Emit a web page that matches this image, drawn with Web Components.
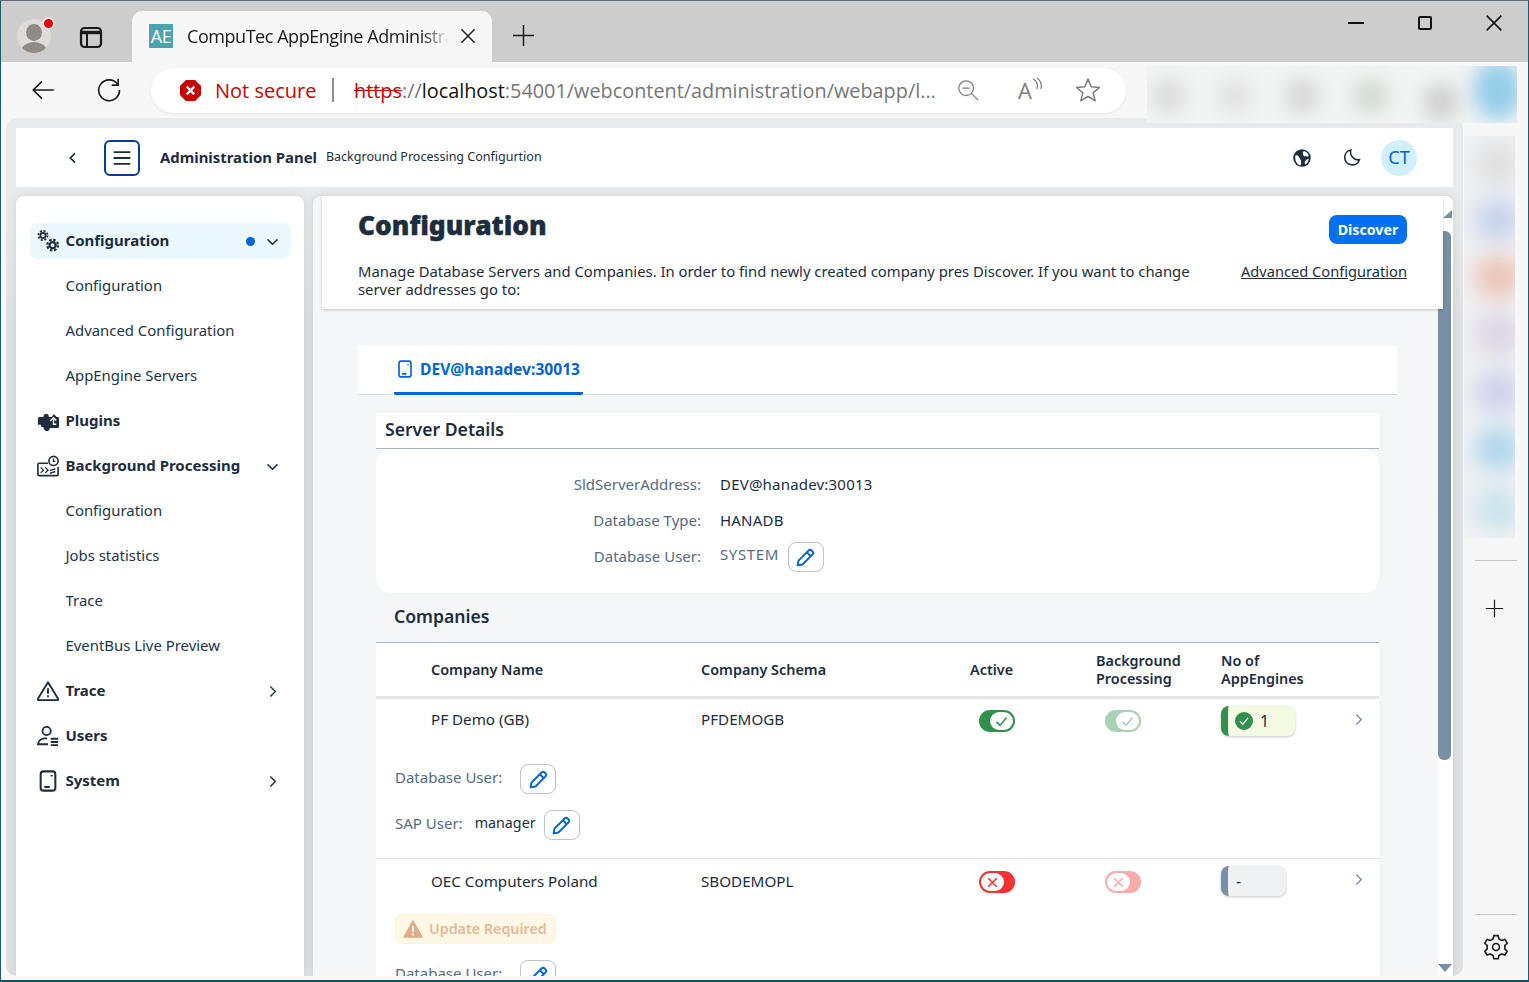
<!DOCTYPE html>
<html lang="en">
<head>
<meta charset="utf-8">
<title>CompuTec AppEngine Administration</title>
<style>
  html, body { margin: 0; height: 100%; overflow: hidden; background: #f7f7f7; }
  body { font-family: "Noto Sans", sans-serif; color: #1d2d3e; }
</style>
</head>
<body>
<browser-window>
  <tab-strip></tab-strip>
  <address-toolbar></address-toolbar>
  <div slot="frame">
    <app-header></app-header>
    <div style="display:flex;gap:9px;height:780px;margin-top:9px">
      <side-nav>
        <nav-item icon="gears" active dot chevron="down">Configuration</nav-item>
        <nav-item sub>Configuration</nav-item>
        <nav-item sub>Advanced Configuration</nav-item>
        <nav-item sub>AppEngine Servers</nav-item>
        <nav-item icon="puzzle">Plugins</nav-item>
        <nav-item icon="process" chevron="down">Background Processing</nav-item>
        <nav-item sub>Configuration</nav-item>
        <nav-item sub>Jobs statistics</nav-item>
        <nav-item sub>Trace</nav-item>
        <nav-item sub>EventBus Live Preview</nav-item>
        <nav-item icon="warning" chevron="right">Trace</nav-item>
        <nav-item icon="users">Users</nav-item>
        <nav-item icon="device" chevron="right">System</nav-item>
      </side-nav>
      <main-panel>
        <server-details></server-details>
        <companies-table>
          <company-row name="PF Demo (GB)" schema="PFDEMOGB" state="on" count="1" sapuser="manager"></company-row>
          <company-row name="OEC Computers Poland" schema="SBODEMOPL" state="off" count="-" update></company-row>
        </companies-table>
      </main-panel>
    </div>
  </div>
  <side-rail slot="rail"></side-rail>
</browser-window>

<script>
const ICONS = {
  back: `<path d="M22 12H3M11 4l-8 8 8 8" fill="none" stroke="currentColor" stroke-width="1.5"/>`,
  reload: `<path d="M20 6.8A9.6 9.6 0 1 0 21.7 12" fill="none" stroke="currentColor" stroke-width="1.5"/><path d="M20.5 1.5v6h-6" fill="none" stroke="currentColor" stroke-width="1.5"/>`,
  octagon: `<polygon points="7.2,1 16.8,1 23,7.2 23,16.8 16.8,23 7.2,23 1,16.8 1,7.2" fill="#c80000"/><path d="M8 8l8 8M16 8l-8 8" stroke="#fff" stroke-width="2.4"/>`,
  zoomout: `<circle cx="10" cy="10" r="8" fill="none" stroke="currentColor" stroke-width="1.4"/><path d="M6 10h8M16 16l7 7" fill="none" stroke="currentColor" stroke-width="1.4"/>`,
  star: `<polygon points="12,2 15,9 22.5,9.7 16.8,14.6 18.6,22 12,18 5.4,22 7.2,14.6 1.5,9.7 9,9" fill="none" stroke="currentColor" stroke-width="1.4" stroke-linejoin="round"/>`,
  close: `<path d="M4 4l16 16M20 4L4 20" fill="none" stroke="currentColor" stroke-width="1.7"/>`,
  plus: `<path d="M12 1v22M1 12h22" fill="none" stroke="currentColor" stroke-width="1.5"/>`,
  sidetabs: `<rect x="2" y="3" width="20" height="19" rx="3.5" fill="none" stroke="currentColor" stroke-width="2.200"/><path d="M2.500 7.500h19" stroke="currentColor" stroke-width="3.400"/><path d="M8 9v12" stroke="currentColor" stroke-width="2"/>`,
  chevleft: `<path d="M15 5l-7 7 7 7" fill="none" stroke="currentColor" stroke-width="2.4"/>`,
  chevright: `<path d="M9 5l7 7-7 7" fill="none" stroke="currentColor" stroke-width="2"/>`,
  chevdown: `<path d="M5 9l7 7 7-7" fill="none" stroke="currentColor" stroke-width="2"/>`,
  menu: `<path d="M2 5h20M2 12h20M2 19h20" fill="none" stroke="currentColor" stroke-width="2.2"/>`,
  globe: `<circle cx="12" cy="12" r="10.500" fill="#1d2d3e"/><path d="M4 9c3-1 4 1 5 3s2 2 2 4 0 4-1 5c-4-1-7-6-6-12zM14 4c3 0 6 3 6 6-2 1-3-1-4 0s-3-1-3-3 0-2 1-3zM17 14l3-1c0 3-2 6-4 7l-1-3z" fill="#fff"/>`,
  moon: `<path d="M11 2.5a9.5 9.5 0 1 0 11 12.2c-6 1.8-12.6-4.7-11-12.2z" fill="none" stroke="currentColor" stroke-width="2"/>`,
  gears: `<circle cx="6.500" cy="6" r="2.800" fill="none" stroke="currentColor" stroke-width="2"/><circle cx="6.500" cy="6" r="5" fill="none" stroke="currentColor" stroke-width="2" stroke-dasharray="2.200 1.730"/><circle cx="17" cy="16.500" r="3.300" fill="none" stroke="currentColor" stroke-width="2.400"/><circle cx="17" cy="16.500" r="5.800" fill="none" stroke="currentColor" stroke-width="2.400" stroke-dasharray="2.700 1.860"/>`,
  puzzle: `<path d="M1 9.500c0-1.500 1-2 2.500-2H7C7 5.500 8 4 10 4s3 1.500 3 3.500h3l2-3 2 1.500 1.500 1.500h1c.8 0 1.500.7 1.500 1.500v9c0 .8-.7 1.500-1.500 1.500H14c0 2-1.500 3.500-3.500 3.500S7 20.500 7 18.500H4.500C5.500 16 3 15 1 16.500z" fill="currentColor"/><path d="M14.500 12l3.500-3.500 3 3M18 10v5.500h3" fill="none" stroke="#fff" stroke-width="1.500"/>`,
  process: `<path d="M12 9H2.500C1.700 9 1 9.700 1 10.500v10.500c0 .8.7 1.500 1.500 1.500h19c.8 0 1.500-.7 1.500-1.500v-8" fill="none" stroke="currentColor" stroke-width="1.800"/><path d="M4 13.500l3 3-3 3M9 13.500l3 3-3 3M14 20l6-2M14 17l6-2" fill="none" stroke="currentColor" stroke-width="1.500"/><circle cx="18" cy="6.500" r="5" fill="#fff" stroke="currentColor" stroke-width="1.800"/><path d="M18 3.800v3.200h2" fill="none" stroke="currentColor" stroke-width="1.500"/>`,
  warning: `<path d="M12 2.500L23 20.500c.4.800 0 1.500-1 1.500H2c-1 0-1.400-.7-1-1.500z" fill="none" stroke="currentColor" stroke-width="2" stroke-linejoin="round"/><path d="M12 9v6M12 16.500v2.200" stroke="currentColor" stroke-width="2"/>`,
  users: `<circle cx="10.500" cy="6.500" r="4.500" fill="none" stroke="currentColor" stroke-width="2"/><path d="M11 14.500H8.500C5 14.500 1.500 17 1 21h11" fill="none" stroke="currentColor" stroke-width="2"/><path d="M15 15h8M15 18.500h8M15 22h8" stroke="currentColor" stroke-width="2"/>`,
  device: `<rect x="4" y="1.500" width="16" height="21" rx="3" fill="none" stroke="currentColor" stroke-width="2.200"/><path d="M8 18.500h6M16 5.500v1.500" stroke="currentColor" stroke-width="2.200"/>`,
  pencil: `<path d="M3 21l1-5.500L15.500 4c1-1 2.500-1 3.500 0l1 1c1 1 1 2.500 0 3.500L8.500 20z" fill="none" stroke="currentColor" stroke-width="2.200" stroke-linejoin="round"/><path d="M13.500 6l4.500 4.500" stroke="currentColor" stroke-width="2.200"/>`,
  check: `<path d="M5 12.500l5 5 9-11" fill="none" stroke="currentColor" stroke-width="2.200"/>`,
  cross: `<path d="M6 6l12 12M18 6L6 18" fill="none" stroke="currentColor" stroke-width="2.200"/>`,
  gear: `<path d="M10 1.500h4l.7 3 2.600 1.500 3-1 2 3.500-2.200 2.200v3l2.200 2.200-2 3.500-3-1-2.600 1.500-.7 3h-4l-.7-3L6.700 18.400l-3 1-2-3.500 2.200-2.200v-3L1.700 8.500l2-3.500 3 1 2.600-1.500z" fill="none" stroke="currentColor" stroke-width="1.500" stroke-linejoin="round"/><circle cx="12" cy="12" r="3.200" fill="none" stroke="currentColor" stroke-width="1.500"/>`,
};

class XIcon extends HTMLElement {
  connectedCallback() {
    const size = this.getAttribute("size") || 24;
    const shadow = this.attachShadow({ mode: "open" });
    shadow.innerHTML = `
      <style>:host { display: inline-flex; flex: none; line-height: 0; } svg { display: block; }</style>
      <svg width="${size}" height="${size}" viewBox="0 0 24 24">${ICONS[this.getAttribute("name")] || ""}</svg>`;
  }
}
customElements.define("x-icon", XIcon);

class BrowserWindow extends HTMLElement {
  constructor() {
    super();
    this.attachShadow({ mode: "open" }).innerHTML = `
      <style>
        :host {
          display: flex; flex-direction: column; box-sizing: border-box;
          height: 982px; width: 1529px; overflow: hidden;
          border-top: 1px solid #5f6c72; border-left: 1px solid #1c5a74;
          border-right: 1px solid #1c5a74; border-bottom: 2px solid #14506a;
          background: #f7f7f7;
        }
        .body { display: flex; height: 858px; }
        .frame {
          box-sizing: border-box; width: 1457px; height: 858px; margin-left: 5px;
          padding: 10px 10px 0; background: #e9eaec; border-radius: 10px;
          background: linear-gradient(#e9eaec 78px, #dfe2e5 200px);
          overflow: hidden; flex: none;
        }
      </style>
      <slot></slot>
      <div class="body">
        <div class="frame"><slot name="frame"></slot></div>
        <slot name="rail"></slot>
      </div>`;
  }
}
customElements.define("browser-window", BrowserWindow);

class TabStrip extends HTMLElement {
  constructor() {
    super();
    this.attachShadow({ mode: "open" }).innerHTML = `
      <style>
        :host {
          display: flex; align-items: flex-end; height: 61px; background: #cdcdcd;
          font-family: "Open Sans", sans-serif; color: #1a1a1a; flex: none;
        }
        .avatar {
          position: relative; width: 34px; height: 34px; margin: 0 0 9px 16px; border-radius: 50%;
          background: #dedcd9; overflow: hidden; flex: none;
        }
        .avatar i { position: absolute; background: #8f8b87; border-radius: 50%; }
        .avatar .h { left: 9px; top: 5px; width: 16px; height: 17px; }
        .avatar .b { left: 4px; top: 23px; width: 26px; height: 18px; }
        .dot {
          position: absolute; left: 42px; top: 17px; width: 9px; height: 9px; border-radius: 50%;
          background: #e60000; border: 2px solid #e9e9e9;
        }
        .vt { margin: 0 0 13px 28px; color: #1a1a1a; }
        .tab {
          display: flex; align-items: center; box-sizing: border-box; width: 360px; height: 51px; margin-left: 29px;
          background: #f7f7f7; border-radius: 10px 10px 0 0; padding: 0 14px 2px 17px;
        }
        .fav {
          width: 24px; height: 24px; background: #4aa3ad; color: #fff; font: 400 18px/24px "Open Sans", sans-serif;
          text-align: center; flex: none; overflow: hidden; letter-spacing: -.5px;
        }
        .title {
          flex: 1; margin-left: 14px; font-size: 18px; letter-spacing: -.45px; white-space: nowrap; overflow: hidden;
          -webkit-mask-image: linear-gradient(90deg, #000 235px, transparent 262px);
        }
        .plus { margin: 0 0 15px 20px; }
        .spacer { flex: 1; }
        .win { display: flex; align-items: center; margin-bottom: 28px; }
        .min { width: 16px; height: 2px; background: #111; margin-right: 54px; }
        .max { width: 10px; height: 10px; border: 2px solid #111; border-radius: 2px; margin-right: 50.500px; }
        .cl { margin-right: 23.500px; color: #111; }
      </style>
      <div class="avatar"><i class="h"></i><i class="b"></i></div>
      <span class="dot"></span>
      <x-icon class="vt" name="sidetabs" size="24"></x-icon>
      <div class="tab">
        <span class="fav">AE</span>
        <span class="title">CompuTec AppEngine Administration</span>
        <x-icon name="close" size="20"></x-icon>
      </div>
      <x-icon class="plus" name="plus" size="23"></x-icon>
      <div class="spacer"></div>
      <div class="win"><span class="min"></span><span class="max"></span><x-icon class="cl" name="close" size="22"></x-icon></div>`;
  }
}
customElements.define("tab-strip", TabStrip);

class AddressToolbar extends HTMLElement {
  constructor() {
    super();
    this.attachShadow({ mode: "open" }).innerHTML = `
      <style>
        :host {
          position: relative; display: flex; align-items: center; height: 56px; background: #f7f7f7;
          font-family: "Open Sans", sans-serif; flex: none; z-index: 2;
        }
        .nav { margin-left: 29px; color: #1a1a1a; }
        .nav + .nav { margin-left: 40px; }
        .pill {
          display: flex; align-items: center; box-sizing: border-box; width: 975px; height: 45px; margin-left: 29px;
          background: #fff; border-radius: 23px; box-shadow: 0 1px 3px rgba(0,0,0,.07); padding-left: 28px;
        }
        .red { box-sizing: border-box; width: 101px; color: #c80000; font-size: 20px; margin-left: 13px; white-space: nowrap; }
        .sep { width: 2px; height: 24px; background: #8c8c8c; margin: 0 20px 0 16px; flex: none; }
        .url { width: 583px; font-size: 19.850px; white-space: nowrap; color: #767676; flex: none; }
        .url s { text-decoration-color: #c80000; color: #c80000; }
        .url b { font-weight: 400; color: #111; }
        .ico { color: #7d7d7d; }
        .zo { margin-left: 20px; }
        .aa { display: flex; align-items: flex-start; margin-left: 39px; color: #7d7d7d; font-size: 22px; line-height: 26px; }
        .st { margin-left: 31px; }
        .blur {
          position: absolute; left: 1146px; top: 4px; width: 370px; height: 57px; overflow: hidden;
          background: #f3f4f4;
        }
        .blur i { position: absolute; top: 12px; width: 36px; height: 36px; border-radius: 50%; filter: blur(10px); opacity: .8; }
      </style>
      <x-icon class="nav" name="back" size="26"></x-icon>
      <x-icon class="nav" name="reload" size="26"></x-icon>
      <div class="pill">
        <x-icon name="octagon" size="23"></x-icon>
        <span class="red">Not secure</span>
        <span class="sep"></span>
        <span class="url"><s>https</s>://<b>localhost</b>:54001/webcontent/administration/webapp/l...</span>
        <x-icon class="ico zo" name="zoomout" size="22"></x-icon>
        <span class="aa">A<svg width="12" height="20" viewBox="0 0 12 20"><path d="M1 2c4 2 5 6 4 10M5 1c4 3 5 7 4 11" fill="none" stroke="currentColor" stroke-width="1.200"/></svg></span>
        <x-icon class="ico st" name="star" size="26"></x-icon>
      </div>
      <div class="blur">
        <i style="left:4px;background:#d4d4d4"></i><i style="left:70px;background:#dcdcdc"></i>
        <i style="left:137px;background:#cfcfcf"></i><i style="left:206px;background:#c6d4c6"></i>
        <i style="left:276px;top:18px;background:#c2c2c2"></i>
        <i style="left:326px;width:50px;height:60px;top:-6px;background:#7cc4e6"></i>
      </div>`;
  }
}
customElements.define("address-toolbar", AddressToolbar);

class SideRail extends HTMLElement {
  constructor() {
    super();
    const blobs = [["#dcdcdc",0],["#bccbec",56],["#eab9a6",113],["#d8cde0",170],["#c4caea",228],["#9fd0ea",285],["#c0e0ec",345]];
    this.attachShadow({ mode: "open" }).innerHTML = `
      <style>
        :host { display: flex; flex-direction: column; align-items: center; flex: 1; box-sizing: border-box; padding-top: 18px; color: #1a1a1a; }
        .blur { position: relative; width: 51px; height: 402px; margin-left: -12px; overflow: hidden; background: #f0f1f3; flex: none; }
        .blur i { position: absolute; left: 10px; width: 48px; height: 44px; border-radius: 50%; filter: blur(11px); opacity: .8; }
        .line { width: 42px; height: 1px; background: #c8c8c8; flex: none; }
        .plus { margin: 38px 2px 0 0; }
        .spacer { flex: 1; }
        .gear { margin: 19px 0 16px; }
      </style>
      <div class="blur">${blobs.map(([c, t]) => `<i style="background:${c};top:${t + 6}px"></i>`).join("")}</div>
      <div class="line" style="margin-top:22px"></div>
      <x-icon class="plus" name="plus" size="19"></x-icon>
      <div class="spacer"></div>
      <div class="line"></div>
      <x-icon class="gear" name="gear" size="26"></x-icon>`;
  }
}
customElements.define("side-rail", SideRail);

class AppHeader extends HTMLElement {
  constructor() {
    super();
    this.attachShadow({ mode: "open" }).innerHTML = `
      <style>
        :host { display: flex; align-items: center; height: 59px; background: #fff; box-sizing: border-box; color: #1d2d3e; }
        .back { margin-left: 49px; }
        .menu {
          display: flex; align-items: center; justify-content: center; box-sizing: border-box;
          width: 36px; height: 36px; margin-left: 23px; border: 2px solid #0a3c96; border-radius: 6px;
        }
        .title { margin-left: 20px; font-size: 14.900px; font-weight: 700; white-space: nowrap; padding-bottom: 2px; }
        .sub { margin-left: 9px; font-size: 12.500px; white-space: nowrap; padding-bottom: 3px; }
        .spacer { flex: 1; }
        .moon { margin-left: 30px; }
        .avatar {
          width: 36px; height: 36px; margin: 0 36px 0 20px; border-radius: 50%; background: #d1efff; color: #0064d9;
          font-size: 18px; line-height: 34px; text-align: center;
        }
      </style>
      <x-icon class="back" name="chevleft" size="16"></x-icon>
      <span class="menu"><x-icon name="menu" size="20"></x-icon></span>
      <span class="title">Administration Panel</span>
      <span class="sub">Background Processing Configurtion</span>
      <span class="spacer"></span>
      <x-icon name="globe" size="20"></x-icon>
      <x-icon class="moon" name="moon" size="19"></x-icon>
      <span class="avatar">CT</span>`;
  }
}
customElements.define("app-header", AppHeader);

class SideNav extends HTMLElement {
  constructor() {
    super();
    this.attachShadow({ mode: "open" }).innerHTML = `
      <style>
        :host {
          display: block; box-sizing: border-box; width: 288px; height: 780px; flex: none; background: #fff;
          border-radius: 8px 8px 0 0; padding: 23px 13px 0 14px; box-shadow: 0 0 8px rgba(0,0,0,.1);
        }
      </style>
      <slot></slot>`;
  }
}
customElements.define("side-nav", SideNav);

class NavItem extends HTMLElement {
  connectedCallback() {
    const icon = this.getAttribute("icon");
    const chevron = this.getAttribute("chevron");
    this.attachShadow({ mode: "open" }).innerHTML = `
      <style>
        :host { display: block; height: 45px; padding: 4px 0 5px; box-sizing: border-box; }
        .row {
          display: flex; align-items: center; height: 36px; border-radius: 8px; box-sizing: border-box;
          padding: 0 10.500px 0 7px; font-size: 14.900px; color: #1d2d3e; white-space: nowrap;
        }
        :host([active]) .row { background: #ebf8ff; }
        .ic { width: 22px; height: 22px; margin-right: 6.500px; flex: none; }
        .txt { flex: 1; font-weight: 700; font-size: 15px; padding-bottom: 2px; }
        :host([sub]) .txt { font-weight: 400; font-size: 14.900px; padding-left: 28.500px; color: #223548; }
        .dot { width: 9px; height: 9px; border-radius: 50%; background: #0064d9; margin-right: 9px; }
        .chev { color: #1d2d3e; }
      </style>
      <div class="row">
        ${icon ? `<x-icon class="ic" name="${icon}" size="22"></x-icon>` : ""}
        <span class="txt"><slot></slot></span>
        ${this.hasAttribute("dot") ? `<span class="dot"></span>` : ""}
        ${chevron ? `<x-icon class="chev" name="${chevron === "down" ? "chevdown" : "chevright"}" size="17"></x-icon>` : ""}
      </div>`;
  }
}
customElements.define("nav-item", NavItem);

class MainPanel extends HTMLElement {
  constructor() {
    super();
    this.attachShadow({ mode: "open" }).innerHTML = `
      <style>
        :host {
          position: relative; display: block; width: 1140px; height: 780px; flex: none; box-sizing: border-box;
          background: #f5f6f7; border-radius: 8px 8px 0 0; overflow: hidden; box-shadow: 0 0 8px rgba(0,0,0,.1);
        }
        .top {
          display: flex; box-sizing: border-box; width: 1121px; height: 113px; margin-left: 9px; background: #fff;
          padding: 0 36px; box-shadow: 0 1px 3px rgba(0,0,0,.2); position: relative; z-index: 3;
        }
        .left { flex: 1; min-width: 0; }
        h1 { margin: 12px 0 0; font-size: 26.300px; line-height: 34px; font-weight: 900; -webkit-text-stroke: .4px #1d2d3e; }
        p { width: 850px; margin: 20px 0 0; font-size: 14.850px; line-height: 18px; color: #1d2d3e; }
        .right { display: flex; flex-direction: column; align-items: flex-end; }
        button {
          height: 29px; width: 78px; margin: 19px 0 0; padding: 0; border: 0; border-radius: 8px; background: #0070f2; color: #fff;
          font: 700 14.200px/27px "Noto Sans", sans-serif;
        }
        a { margin-top: 18px; font-size: 14.650px; line-height: 18px; color: #1d2d3e; text-decoration: underline; white-space: nowrap; }
        .content { padding: 37px 56px 0 45px; width: 1039px; }
        .tabs {
          display: flex; height: 49px; background: #fff; border-bottom: 1px solid #d9d9d9; box-sizing: border-box; padding-left: 36px;
        }
        .tab {
          display: flex; align-items: center; box-sizing: border-box; height: 49px; width: 189px; padding: 0 0 0 2px;
          color: #0064d9; font-weight: 700; font-size: 15.600px; border-bottom: 3px solid #0064d9; border-radius: 0 0 2px 2px; white-space: nowrap;
        }
        .tab x-icon { margin-right: 6px; }
        .inner { padding: 18px 18px 0; }
        /* scrollbar sits over the page content, the sticky header covers its left part */
        .sb { position: absolute; right: 0; top: 0; bottom: 0; width: 20px; z-index: 2; background: linear-gradient(90deg, transparent 5px, #fff 5px); }
        .thumb { position: absolute; left: 5px; top: 35px; width: 13px; height: 529px; background: #788fa6; border-radius: 6px; }
        .up { position: absolute; right: 1px; top: 14px; border-style: solid; border-width: 0 0 8px 9px; border-color: transparent transparent #788fa6 transparent; }
        .down { position: absolute; right: 1px; top: 768px; border-style: solid; border-width: 8px 7.500px 0; border-color: #788fa6 transparent transparent; }
      </style>
      <div class="top">
        <div class="left">
          <h1>Configuration</h1>
          <p>Manage Database Servers and Companies. In order to find newly created company pres Discover. If you want to change server addresses go to:</p>
        </div>
        <div class="right"><button>Discover</button><a>Advanced Configuration</a></div>
      </div>
      <div class="content">
        <div class="tabs"><div class="tab"><x-icon name="device" size="18"></x-icon>DEV@hanadev:30013</div></div>
        <div class="inner"><slot></slot></div>
      </div>
      <div class="sb"><span class="up"></span><span class="thumb"></span><span class="down"></span></div>`;
  }
}
customElements.define("main-panel", MainPanel);

class EditButton extends HTMLElement {
  constructor() {
    super();
    this.attachShadow({ mode: "open" }).innerHTML = `
      <style>
        :host {
          display: inline-flex; align-items: center; justify-content: center; box-sizing: border-box;
          width: 36px; height: 30px; border: 1px solid #bcc3ca; border-radius: 8px; background: #fff; color: #0064d9; flex: none;
        }
      </style>
      <x-icon name="pencil" size="21"></x-icon>`;
  }
}
customElements.define("edit-button", EditButton);

class ServerDetails extends HTMLElement {
  constructor() {
    super();
    this.attachShadow({ mode: "open" }).innerHTML = `
      <style>
        :host { display: block; }
        h2 {
          margin: 0; height: 36px; box-sizing: border-box; padding-left: 9px; background: #fff; border-bottom: 1px solid #a9b4be;
          font-size: 17.600px; line-height: 32px; font-weight: 600;
        }
        .card {
          display: grid; grid-template-columns: 325px 1fr; grid-auto-rows: 36px; column-gap: 19px; align-items: center;
          height: 144px; box-sizing: border-box; padding-top: 18px; background: #fff; border-radius: 16px; font-size: 15px;
        }
        .l { text-align: right; color: #556b82; padding-bottom: 2px; }
        .v { display: flex; align-items: center; color: #1d2d3e; }
        .t { padding-bottom: 2px; letter-spacing: .2px; }
        .v span.s { color: #556b82; margin: 0 9px 0 0; padding-bottom: 6px; letter-spacing: .6px; }
      </style>
      <h2>Server Details</h2>
      <div class="card">
        <div class="l">SldServerAddress:</div><div class="v"><span class="t">DEV@hanadev:30013</span></div>
        <div class="l">Database Type:</div><div class="v"><span class="t">HANADB</span></div>
        <div class="l">Database User:</div><div class="v"><span class="s">SYSTEM</span><edit-button></edit-button></div>
      </div>`;
  }
}
customElements.define("server-details", ServerDetails);

class CompaniesTable extends HTMLElement {
  constructor() {
    super();
    this.attachShadow({ mode: "open" }).innerHTML = `
      <style>
        :host { display: block; }
        h2 {
          margin: 0; height: 50px; box-sizing: border-box; padding-left: 18px; border-bottom: 1px solid #a9b4be;
          font-size: 17.600px; line-height: 46px; font-weight: 600;
        }
        .body { background: #fff; }
        .head {
          display: grid; grid-template-columns: 55px 270px 269px 126px 125px 104px 1fr; align-items: center; height: 56px; box-sizing: border-box;
          border-bottom: 3px solid #e5e5e5; font-size: 14.400px; line-height: 18px; font-weight: 600;
        }
      </style>
      <h2>Companies</h2>
      <div class="body">
        <div class="head"><span></span><span>Company Name</span><span>Company Schema</span><span>Active</span><span>Background Processing</span><span>No of AppEngines</span></div>
        <slot></slot>
      </div>`;
  }
}
customElements.define("companies-table", CompaniesTable);

class ToggleSwitch extends HTMLElement {
  connectedCallback() {
    const on = this.getAttribute("state") === "on";
    this.attachShadow({ mode: "open" }).innerHTML = `
      <style>
        :host {
          display: flex; align-items: center; box-sizing: border-box; width: 36px; height: 22px; padding: 2px; border-radius: 11px;
          justify-content: ${on ? "flex-end" : "flex-start"}; background: ${on ? "#30914c" : "#f53232"}; margin-left: 9px;
        }
        :host([muted]) { opacity: .4; }
        .knob {
          display: flex; align-items: center; justify-content: center; width: 23px; height: 18px; border-radius: 9px;
          background: #fff; color: ${on ? "#30914c" : "#f53232"};
        }
      </style>
      <span class="knob"><x-icon name="${on ? "check" : "cross"}" size="17"></x-icon></span>`;
  }
}
customElements.define("toggle-switch", ToggleSwitch);

class CountBadge extends HTMLElement {
  connectedCallback() {
    const ok = this.getAttribute("count") !== "-";
    this.attachShadow({ mode: "open" }).innerHTML = `
      <style>
        :host {
          display: flex; align-items: center; box-sizing: border-box; height: 30px; width: ${ok ? 74 : 65}px; border-radius: 8px;
          border-left: 7px solid ${ok ? "#30914c" : "#788fa6"}; background: ${ok ? "#f5fae5" : "#eff1f2"};
          box-shadow: 0 1px 3px rgba(0,0,0,.22); font-size: 16px; padding-left: ${ok ? 7 : 8}px; color: #1d2d3e;
        }
        .c { display: flex; align-items: center; justify-content: center; width: 18px; height: 18px; border-radius: 50%; background: #30914c; color: #fff; margin-right: 7px; }
      </style>
      ${ok ? `<span class="c"><x-icon name="check" size="14"></x-icon></span>` : ""}<span>${this.getAttribute("count")}</span>`;
  }
}
customElements.define("count-badge", CountBadge);

class CompanyRow extends HTMLElement {
  connectedCallback() {
    const state = this.getAttribute("state");
    const sap = this.getAttribute("sapuser");
    const update = this.hasAttribute("update");
    this.attachShadow({ mode: "open" }).innerHTML = `
      <style>
        :host { display: block; box-sizing: border-box; font-size: 15.200px; color: #1d2d3e; }
        :host(:not([update])) { height: 160px; border-bottom: 1px solid #e5e5e5; }
        .main {
          display: grid; grid-template-columns: 55px 270px 269px 126px 125px 128.500px 1fr; align-items: center;
          height: 44px; padding-top: 0;
        }
        :host(:not([update])) .t { padding-bottom: 4px; }
        :host([update]) toggle-switch { margin-top: 2px; }
        .chev { color: #788fa6; margin-top: -4px; }
        .field { display: flex; align-items: center; padding-left: 19px; color: #556b82; white-space: nowrap; font-size: 15px; }
        .field .t2 { padding-bottom: 4px; }
        .db { margin-top: 21px; height: 30px; }
        .db edit-button { margin-left: 18px; }
        .sap { margin-top: 16px; height: 30px; }
        .sap span.m { color: #1d2d3e; margin: -5px 8px 0 12px; font-size: 14.300px; }
        .update {
          display: flex; align-items: center; box-sizing: border-box; width: 161px; height: 30px; margin: 11px 0 0 19px; padding-left: 8px;
          border-radius: 8px; background: #fff8e6; box-shadow: 0 0 0 1px #fdf3d8 inset; color: #e6b898; font-weight: 600; white-space: nowrap; font-size: 14.300px;
        }
        .update svg { margin-right: 6px; }
        .update span { padding-bottom: 2px; }
        .db2 { margin-top: 16px; }
      </style>
      <div class="main">
        <span></span><span class="t">${this.getAttribute("name")}</span><span class="t">${this.getAttribute("schema")}</span>
        <toggle-switch state="${state}"></toggle-switch>
        <toggle-switch state="${state}" muted></toggle-switch>
        <count-badge count="${this.getAttribute("count")}"></count-badge>
        <x-icon class="chev" name="chevright" size="17"></x-icon>
      </div>
      ${update ? `<div class="update"><svg width="20" height="18" viewBox="0 0 20 18"><path d="M10 1l9 16H1z" fill="#e0ad88" stroke="#e0ad88" stroke-width="1.500" stroke-linejoin="round"/><path d="M10 6v6M10 13.500v2" stroke="#fff" stroke-width="2"/></svg><span>Update Required</span></div>` : ""}
      <div class="field db ${update ? "db2" : ""}"><span class="t2">Database User:</span><edit-button></edit-button></div>
      ${sap ? `<div class="field sap"><span class="t2">SAP User:</span><span class="m">${sap}</span><edit-button></edit-button></div>` : ""}`;
  }
}
customElements.define("company-row", CompanyRow);
</script>
</body>
</html>
